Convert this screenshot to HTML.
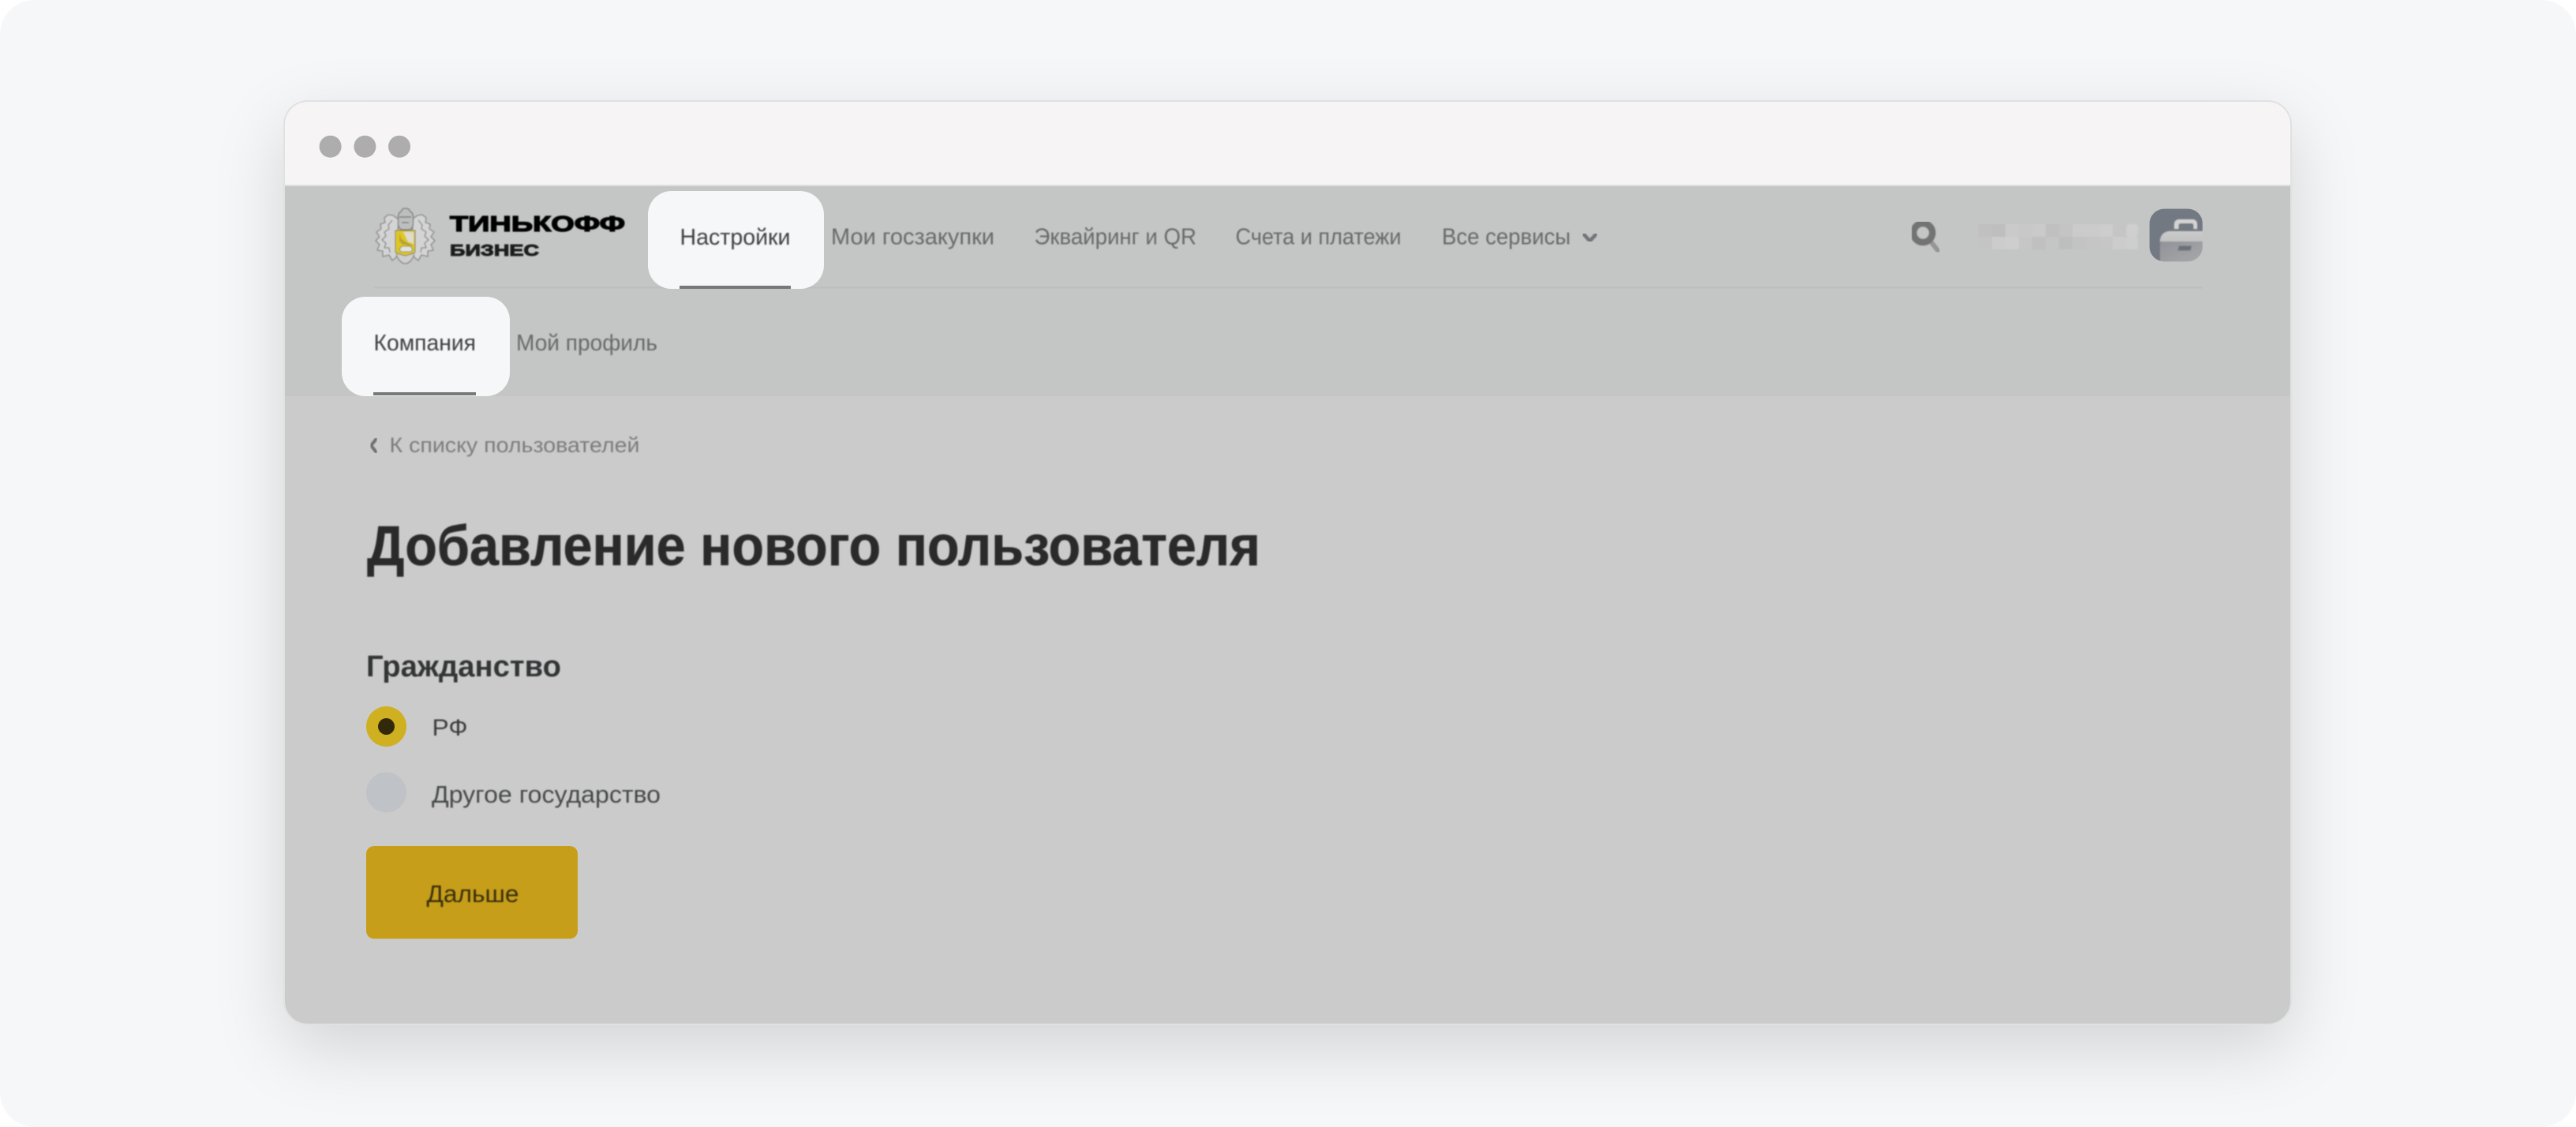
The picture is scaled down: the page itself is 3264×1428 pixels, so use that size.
<!DOCTYPE html>
<html lang="ru"><head><meta charset="utf-8"><title>Добавление нового пользователя</title>
<style>
html,body{margin:0;padding:0;background:#fff;width:3264px;height:1428px;overflow:hidden}
#bg{position:absolute;left:0;top:0;width:3264px;height:1428px;background:#f6f7f9;border-radius:44px;overflow:hidden}
#win{position:absolute;left:360px;top:128px;width:2543px;height:1170px;border-radius:30px;box-shadow:0 30px 90px rgba(0,0,0,.145)}
svg{position:absolute;left:0;top:0}
text{font-family:"Liberation Sans",sans-serif;white-space:pre}
</style></head><body>
<div id="bg"><div id="win"></div>
<svg width="3264" height="1428" viewBox="0 0 3264 1428" xmlns="http://www.w3.org/2000/svg">
<defs>
<filter id="b" x="-5%" y="-20%" width="110%" height="140%"><feGaussianBlur stdDeviation="0.8"/></filter>
<filter id="b2" x="-5%" y="-5%" width="110%" height="110%"><feGaussianBlur stdDeviation="0.7"/></filter>
<clipPath id="w"><rect x="360" y="128" width="2543" height="1170" rx="30"/></clipPath>
<clipPath id="av"><rect x="2723.5" y="264.500" width="67.500" height="67" rx="19"/></clipPath>
<linearGradient id="g1" x1="0" y1="0" x2="0" y2="1"><stop offset="0" stop-color="#cbcbcb"/><stop offset="1" stop-color="#acaeae"/></linearGradient>
<linearGradient id="g2" x1="0" y1="0" x2="1" y2="1"><stop offset="0" stop-color="#8f9298"/><stop offset="1" stop-color="#a8a9aa"/></linearGradient>
<g id="mant" fill="#d3d4d3" stroke="#858686" stroke-width="1.300" stroke-linejoin="round">
<path d="M505 278l-7-5-6-1-5 4 1 6-6 2 1 6-6 4 4 6-5 5 5 5-3 7 7 1v7l8-2 4 7 5-4 2-4v-30z"/>
<path d="M497 279l-5 6 1 5-6 4 2 5-5 5 5 4-2 6 6 0 1 6" fill="none"/>
</g>
</defs>
<g clip-path="url(#w)">
<rect x="360" y="128" width="2543" height="108" fill="#f6f4f5"/>
<rect x="360" y="234" width="2543" height="2" fill="#dededd"/>
<rect x="360" y="236" width="2543" height="266" fill="#c4c6c5"/>
<rect x="360" y="502" width="2543" height="796" fill="#cbcbcb"/>
</g>
<rect x="360" y="128" width="2543" height="1170" rx="30" fill="none" stroke="#e0e1e1" stroke-width="2"/>
<circle cx="418.6" cy="185.7" r="14" fill="#adadad"/><circle cx="462.4" cy="185.7" r="14" fill="#adadad"/><circle cx="506" cy="185.7" r="14" fill="#adadad"/>

<rect x="474" y="363.500" width="2317" height="2" fill="#bcbebd"/>

<!-- active tiles -->
<rect x="821" y="242" width="223" height="124" rx="30" fill="#f6f7f9"/>
<rect x="861" y="362" width="141" height="4" fill="#77787a"/>
<rect x="433" y="376" width="213" height="126" rx="30" fill="#f6f7f9"/>
<rect x="473" y="497" width="130" height="4" fill="#77787a"/>

<!-- emblem -->
<g filter="url(#b2)">
<use href="#mant"/>
<use href="#mant" transform="translate(1027 0) scale(-1 1)"/>
<path d="M513.500 264c-3 0-5 2-5 4-3 1-4 4-4 7v9c0 3 2 6 4 7h11c2-1 4-4 4-7v-9c0-3-1-6-4-7 0-2-2-4-6-4z" fill="#bdbebe" stroke="#767777" stroke-width="1.300"/>
<path d="M506 275h15M509 282h9" stroke="#6c6d6d" stroke-width="1.300" fill="none"/>
<path d="M502 322c2 7 7 12 11.500 12s9.500-5 11.500-12" fill="#cdcecd" stroke="#858686" stroke-width="1.300"/>
<path d="M501 292h25v27c0 2-6 3-12.500 5-6.500-2-12.500-3-12.500-5z" fill="#dfc622" stroke="#77765a" stroke-width="1"/>
<path d="M511 294h13v15l-7-3z" fill="#dcdccf"/>
<path d="M506 295l2 7 5 4 10 5-2 1-12-3-3-4z" fill="#8a8440" opacity=".5"/>
<path d="M506 316l3-4 11 0 3 4-2 3h-13z" fill="#e2e2d8" stroke="#77765a" stroke-width=".8"/>
</g>

<g filter="url(#b2)">
<text x="570" y="293" font-size="27.500" font-weight="700" fill="#060606" stroke="#060606" stroke-width="1.300" textLength="222" lengthAdjust="spacingAndGlyphs">ТИНЬКОФФ</text>
<text x="570" y="324" font-size="20.500" font-weight="700" fill="#1a1a1a" stroke="#1a1a1a" stroke-width="1" textLength="113" lengthAdjust="spacingAndGlyphs">БИЗНЕС</text>
</g>

<g filter="url(#b)" font-size="29">
<text x="861.5" y="310" fill="#3e4043" textLength="140" lengthAdjust="spacingAndGlyphs">Настройки</text>
<text x="1053" y="309.5" fill="#68696b" textLength="207" lengthAdjust="spacingAndGlyphs">Мои госзакупки</text>
<text x="1310.5" y="309.5" fill="#68696b" textLength="205.500" lengthAdjust="spacingAndGlyphs">Эквайринг и QR</text>
<text x="1565.500" y="309.5" fill="#68696b" textLength="210" lengthAdjust="spacingAndGlyphs">Счета и платежи</text>
<text x="1827" y="309.5" fill="#68696b" textLength="163" lengthAdjust="spacingAndGlyphs">Все сервисы</text>
<text x="473.500" y="444" fill="#3e4043" textLength="129.500" lengthAdjust="spacingAndGlyphs">Компания</text>
<text x="654" y="444" fill="#68696b" textLength="179" lengthAdjust="spacingAndGlyphs">Мой профиль</text>
<text x="493.500" y="573" font-size="27" fill="#7c7d7d" textLength="317" lengthAdjust="spacingAndGlyphs">К списку пользователей</text>
<text x="465" y="716" font-size="71" font-weight="700" fill="#2c2c2c" stroke="#2c2c2c" stroke-width=".6" textLength="1132" lengthAdjust="spacingAndGlyphs">Добавление нового пользователя</text>
<text x="464" y="857" font-size="38" font-weight="700" fill="#333435" textLength="247" lengthAdjust="spacingAndGlyphs">Гражданство</text>
<text x="547.500" y="932" font-size="30" fill="#3d3e3f" textLength="45" lengthAdjust="spacingAndGlyphs">РФ</text>
<text x="547" y="1017" font-size="31" fill="#47484a" textLength="290" lengthAdjust="spacingAndGlyphs">Другое государство</text>
<text x="540.5" y="1143" font-size="31" fill="#372d0b" textLength="117" lengthAdjust="spacingAndGlyphs">Дальше</text>
</g>

<path d="M2006.500 296.500l8 9 8-9" fill="none" stroke="#72757c" stroke-width="4.600" stroke-linecap="round" stroke-linejoin="round" filter="url(#b2)"/>
<path d="M477 556l-7 8.500 7 8.500" fill="none" stroke="#6f7072" stroke-width="4" stroke-linecap="round" stroke-linejoin="round" filter="url(#b2)"/>

<!-- search -->
<g filter="url(#b2)">
<path d="M2448 308l7.500 9.500" stroke="#959595" stroke-width="6" stroke-linecap="round"/>
<circle cx="2436.500" cy="295" r="12" fill="none" stroke="#737373" stroke-width="8.500"/>
</g>

<!-- pixelated name -->
<g filter="url(#b2)">
<rect x="2507" y="284" width="17" height="16" fill="#bfc0bf"/><rect x="2524" y="284" width="17" height="16" fill="#bdbebd"/><rect x="2541" y="284" width="17" height="16" fill="#c9cac9"/><rect x="2558" y="284" width="17" height="16" fill="#c7c8c7"/><rect x="2575" y="284" width="17" height="16" fill="#c9cac9"/><rect x="2592" y="284" width="17" height="16" fill="#bfc0bf"/><rect x="2609" y="284" width="17" height="16" fill="#c3c4c3"/><rect x="2626" y="284" width="17" height="16" fill="#cacbca"/><rect x="2643" y="284" width="17" height="16" fill="#cacbca"/><rect x="2660" y="284" width="17" height="16" fill="#cccdcc"/><rect x="2677" y="284" width="17" height="16" fill="#c4c5c4"/><rect x="2694" y="284" width="15" height="16" rx="3" fill="#cecfce"/>
<rect x="2507" y="300" width="17" height="16" fill="#c3c4c3"/><rect x="2524" y="300" width="17" height="16" fill="#cbcccb"/><rect x="2541" y="300" width="17" height="16" fill="#cdcecd"/><rect x="2558" y="300" width="17" height="16" fill="#c5c6c5"/><rect x="2575" y="300" width="17" height="16" fill="#bfc0bf"/><rect x="2592" y="300" width="17" height="16" fill="#c4c5c4"/><rect x="2609" y="300" width="17" height="16" fill="#bdbebe"/><rect x="2626" y="300" width="17" height="16" fill="#c2c3c2"/><rect x="2643" y="300" width="17" height="16" fill="#c4c5c4"/><rect x="2660" y="300" width="17" height="16" fill="#c5c6c5"/><rect x="2677" y="300" width="17" height="16" fill="#cbcccb"/><rect x="2694" y="300" width="15" height="16" rx="3" fill="#cdcecd"/>
</g>

<!-- avatar -->
<g clip-path="url(#av)" filter="url(#b2)">
<rect x="2723" y="264" width="68" height="68" fill="#737982"/>
<path d="M2737 332v-26c0-8 5-13 13-13h41v14h-54z" fill="url(#g1)"/>
<rect x="2737" y="306" width="54" height="26" fill="url(#g2)"/>
<path d="M2755 290v-6c0-3 2-6 6-6h17c4 0 6 3 6 6v6h-4.500v-4c0-2-1-3-3-3h-13c-2 0-3 1-3 3v4z" fill="#d3d3d3"/>
<path d="M2761 311.500h16l-1.500 6h-16z" fill="#6c7179"/>
</g>

<!-- radios and button -->
<circle cx="489.500" cy="920.500" r="25.500" fill="#ceb020"/>
<circle cx="489.500" cy="920.500" r="10.500" fill="#32290b"/>
<circle cx="489.500" cy="1004" r="25.500" fill="#bfc2c6"/>
<rect x="464" y="1072" width="268" height="117.500" rx="10" fill="#c79e1a"/>
<text x="540.5" y="1143" font-size="31" fill="#372d0b" textLength="117" lengthAdjust="spacingAndGlyphs" filter="url(#b)">Дальше</text>
</svg>
</div>
</body></html>
